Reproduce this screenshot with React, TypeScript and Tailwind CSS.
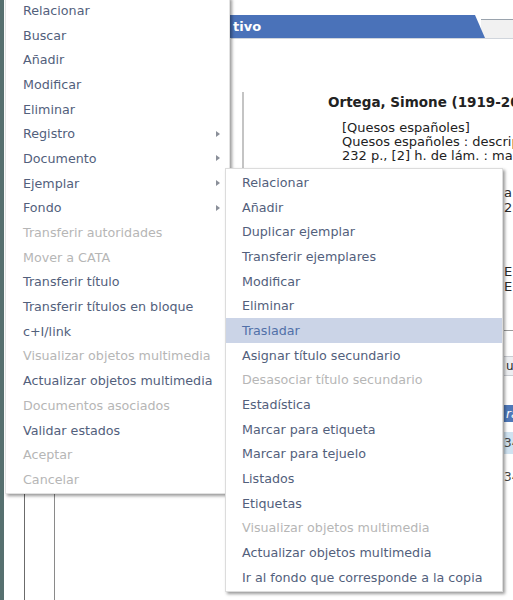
import React from 'react';

type Item = { label: string; disabled?: boolean; sub?: boolean; active?: boolean };

const mainItems: Item[] = [
  { label: 'Relacionar' },
  { label: 'Buscar' },
  { label: 'Añadir' },
  { label: 'Modificar' },
  { label: 'Eliminar' },
  { label: 'Registro', sub: true },
  { label: 'Documento', sub: true },
  { label: 'Ejemplar', sub: true },
  { label: 'Fondo', sub: true },
  { label: 'Transferir autoridades', disabled: true },
  { label: 'Mover a CATA', disabled: true },
  { label: 'Transferir título' },
  { label: 'Transferir títulos en bloque' },
  { label: 'c+I/link' },
  { label: 'Visualizar objetos multimedia', disabled: true },
  { label: 'Actualizar objetos multimedia' },
  { label: 'Documentos asociados', disabled: true },
  { label: 'Validar estados' },
  { label: 'Aceptar', disabled: true },
  { label: 'Cancelar', disabled: true },
];

const subItems: Item[] = [
  { label: 'Relacionar' },
  { label: 'Añadir' },
  { label: 'Duplicar ejemplar' },
  { label: 'Transferir ejemplares' },
  { label: 'Modificar' },
  { label: 'Eliminar' },
  { label: 'Trasladar', active: true },
  { label: 'Asignar título secundario' },
  { label: 'Desasociar título secundario', disabled: true },
  { label: 'Estadística' },
  { label: 'Marcar para etiqueta' },
  { label: 'Marcar para tejuelo' },
  { label: 'Listados' },
  { label: 'Etiquetas' },
  { label: 'Visualizar objetos multimedia', disabled: true },
  { label: 'Actualizar objetos multimedia' },
  { label: 'Ir al fondo que corresponde a la copia' },
];

function MenuRow({ item, pad }: { item: Item; pad: string }) {
  const color = item.disabled
    ? 'text-[#b6b6b6]'
    : item.active
    ? 'text-[#5170a8] bg-[#cbd4e7]'
    : 'text-[#52607c]';
  return (
    <div className={`h-[24.7px] flex items-center justify-between pr-[9px] ${pad} ${color}`}>
      <span className="whitespace-nowrap">{item.label}</span>
      {item.sub && (
        <span className="w-0 h-0 border-y-[3.5px] border-y-transparent border-l-[4px] border-l-[#8a8f99]" />
      )}
    </div>
  );
}

export default function App() {
  return (
    <div
      className="relative w-[513px] h-[600px] overflow-hidden bg-white text-[12.7px]"
      style={{ fontFamily: '"DejaVu Sans", Verdana, sans-serif' }}
    >
      {/* page behind the menus */}
      <div className="flex h-full">
        <div className="w-[4px] shrink-0 bg-[#56706f]" />
        <div className="w-[20px] shrink-0" />
        <div className="w-[30px] shrink-0 border-l border-[#6b6b6b]" />
        <div className="flex-1 min-w-0 border-l border-[#8a8a8a] flex flex-col">
          {/* tab strip */}
          <div className="mt-[15px] ml-[136px] h-[23px] flex">
            <div className="w-[294px] shrink-0 bg-[#4a72b9] pl-[42px] pt-[2px] text-white font-bold text-[13px] [clip-path:polygon(0_0,284px_0,294px_100%,0_100%)]">
              tivo
            </div>
            <div className="flex-1 mt-[4px] border-t border-[#9aa3ad] bg-[#f1f1f1] -ml-[4px]" />
          </div>
          <div className="ml-[176px] h-px bg-[#d0d5dc]" />

          {/* record panel */}
          <div className="mt-[53px] ml-[187px] flex-1 flex border-l-2 border-[#c4c4c4] mb-[30px]">
            <div className="w-[260px] shrink-0 pl-[84px] text-[#222]">
              <div className="whitespace-nowrap text-[13.5px] font-bold">Ortega, Simone (1919-2008)</div>
              <div className="mt-[9px] pl-[14px] whitespace-nowrap text-[13px] leading-[14px]">
                <div>[Quesos españoles]</div>
                <div>Quesos españoles : descripción</div>
                <div>232 p., [2] h. de lám. : map.</div>
              </div>
            </div>
            <div className="flex-1 flex flex-col text-[13px] text-[#2a2a2a]">
              <div className="mt-[93px] leading-[15px]">
                <div>a</div>
                <div>25</div>
              </div>
              <div className="mt-[49px] leading-[15px]">
                <div>E</div>
                <div>E</div>
              </div>
              <div className="mt-[36px] h-px bg-[#9a9a9a]" />
              <div className="mt-[25px] h-[20px] bg-[#eceef1] border-y border-[#c9ccd2] text-[12px] pl-[2px]">ur</div>
              <div className="mt-[29px] h-[17px] bg-[#4f78b8] text-white italic text-[12px] pl-[2px]">ra</div>
              <div className="mt-[10px] h-[22px] bg-[#cfe2f0] text-[12px] leading-[22px] text-[#444]">34</div>
              <div className="mt-[12px] text-[12px] leading-[22px] text-[#444]">34</div>
            </div>
          </div>
        </div>
      </div>

      {/* main context menu */}
      <div className="absolute left-[5px] top-[-3px] w-[225px] pb-[1px] bg-white border border-[#e2e2e2] shadow-[2px_2px_3px_rgba(0,0,0,0.4)]">
        {mainItems.map((it) => (
          <MenuRow key={it.label} item={it} pad="pl-[17px]" />
        ))}
      </div>

      {/* submenu for Ejemplar */}
      <div className="absolute left-[225px] top-[168px] w-[278px] pt-[1px] pb-[1px] bg-white border border-[#dcdcdc] shadow-[2px_2px_3px_rgba(0,0,0,0.4)]">
        {subItems.map((it) => (
          <MenuRow key={it.label} item={it} pad="pl-[16px]" />
        ))}
      </div>
    </div>
  );
}
